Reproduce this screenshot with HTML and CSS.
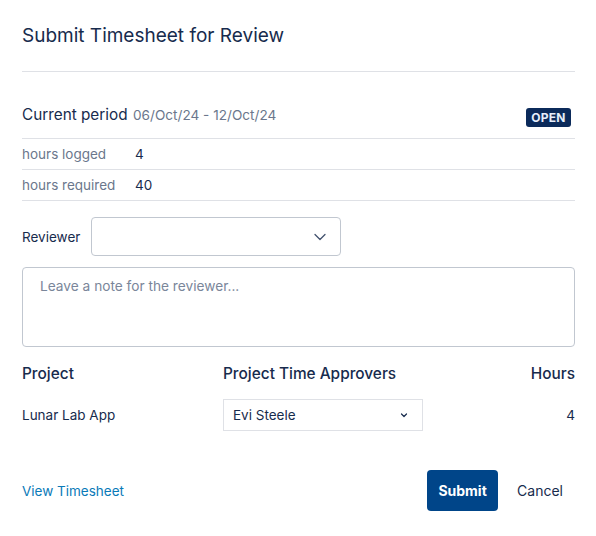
FILE: index.html
```html
<!DOCTYPE html>
<html>
<head>
<meta charset="utf-8">
<link rel="stylesheet" href="styles.css">
</head>
<body>
<div class="dialog">
  <h1 class="title">Submit Timesheet for Review</h1>
  <div class="period">
    <div class="period-text"><span class="period-label">Current period</span> <span class="period-dates">06/Oct/24 - 12/Oct/24</span></div>
    <span class="badge">OPEN</span>
  </div>
  <div class="stat"><span class="stat-label">hours logged</span><span class="stat-value">4</span></div>
  <div class="stat"><span class="stat-label">hours required</span><span class="stat-value">40</span></div>
  <div class="reviewer">
    <span class="reviewer-label">Reviewer</span>
    <div class="select-lg">
      <svg width="14" height="14" viewBox="0 0 14 14"><path d="M2 4.5 L7 9.5 L12 4.5" fill="none" stroke="#42526e" stroke-width="1.3" stroke-linecap="round" stroke-linejoin="round"/></svg>
    </div>
  </div>
  <div class="note">Leave a note for the reviewer...</div>
  <div class="proj-head">
    <span class="c1">Project</span>
    <span class="c2">Project Time Approvers</span>
    <span class="c3">Hours</span>
  </div>
  <div class="proj-row">
    <span class="c1">Lunar Lab App</span>
    <div class="c2"><div class="select-sm"><span>Evi Steele</span>
      <svg width="10" height="10" viewBox="0 0 10 10"><path d="M2.5 4 L5 6.5 L7.5 4" fill="none" stroke="#172b4d" stroke-width="1.2" stroke-linecap="round" stroke-linejoin="round"/></svg></div></div>
    <span class="c3">4</span>
  </div>
  <div class="footer">
    <a class="link">View Timesheet</a>
    <div class="actions">
      <button class="btn-primary">Submit</button>
      <button class="btn-subtle">Cancel</button>
    </div>
  </div>
</div>
</body>
</html>
```

FILE: styles.css
```css
* { box-sizing: border-box; }
html, body { margin: 0; padding: 0; background: #fff; }
body { font-family: Inter, "Noto Sans", sans-serif; color: #172b4d; }
.dialog { width: 596px; padding: 0 21px 0 22px; }
.title { margin: 0; padding-top: 23px; height: 72px; font-size: 19px; font-weight: 400; line-height: 26px; color: #172b4d; border-bottom: 1px solid #dfe1e6; }
.period { display: flex; justify-content: space-between; align-items: center; height: 67px; padding-top: 22px; border-bottom: 1px solid #dfe1e6; padding-right: 4px; }
.period-text { margin-top: -5px; }
.period-label { font-size: 15.3px; color: #172b4d; }
.period-dates { font-size: 13.6px; color: #6b778c; margin-left: 1px; }
.badge { background: #0b2a5a; color: #e6eefb; font-size: 12px; font-weight: 700; width: 45px; height: 19px; text-align: center; border-radius: 3px; letter-spacing: 0.3px; line-height: 19px; margin-top: 2px; }
.stat { display: flex; height: 31px; align-items: center; border-bottom: 1px solid #dfe1e6; font-size: 13.5px; }
.stat-label { width: 113px; color: #6b778c; }
.stat-value { color: #172b4d; }
.reviewer { display: flex; align-items: center; margin-top: 16px; }
.reviewer-label { font-size: 13.5px; width: 69px; color: #172b4d; }
.select-lg { width: 250px; height: 39px; border: 1px solid #c1c7d0; border-radius: 4px; display: flex; align-items: center; justify-content: flex-end; padding-right: 13px; }
.note { margin-top: 11px; height: 80px; border: 1px solid #c1c7d0; border-radius: 4px; padding: 10px 17px; font-size: 13.7px; color: #7a869a; }
.proj-head, .proj-row { display: flex; align-items: center; }
.proj-head { margin-top: 16px; height: 20px; font-size: 15.4px; font-weight: 500; }
.proj-row { margin-top: 16px; height: 32px; font-size: 13.5px; }
.c1 { width: 201px; }
.c2 { width: 200px; }
.c3 { flex: 1; text-align: right; }
.select-sm { width: 200px; height: 32px; border: 1px solid #dfe1e6; display: flex; align-items: center; justify-content: space-between; padding: 0 13px 0 9px; font-size: 13.5px; }
.footer { display: flex; justify-content: space-between; align-items: center; margin-top: 39px; }
.link { font-size: 13.5px; color: #0a7ab8; }
.actions { display: flex; align-items: center; }
.btn-primary { font-family: inherit; background: #004589; color: #fff; border: none; border-radius: 4px; width: 71px; height: 41px; font-size: 14px; font-weight: 700; margin-right: 8px; }
.btn-subtle { font-family: inherit; background: none; border: none; color: #172b4d; font-size: 14px; padding: 0 12px 0 11px; height: 41px; }
```
